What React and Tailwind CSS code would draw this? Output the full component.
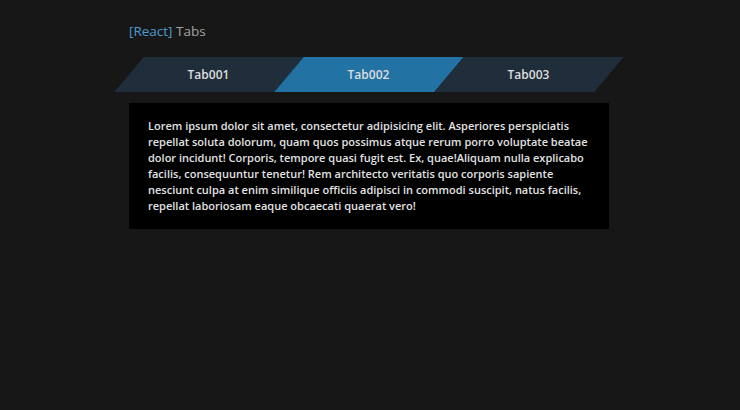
import { useState } from 'react';

const tabs = [
  { id: 'tab001', label: 'Tab001' },
  { id: 'tab002', label: 'Tab002' },
  { id: 'tab003', label: 'Tab003' },
];

const lorem =
  'Lorem ipsum dolor sit amet, consectetur adipisicing elit. Asperiores perspiciatis repellat soluta dolorum, quam quos possimus atque rerum porro voluptate beatae dolor incidunt! Corporis, tempore quasi fugit est. Ex, quae!Aliquam nulla explicabo facilis, consequuntur tenetur! Rem architecto veritatis quo corporis sapiente nesciunt culpa at enim similique officiis adipisci in commodi suscipit, natus facilis, repellat laboriosam eaque obcaecati quaerat vero!';

export default function App() {
  const [active, setActive] = useState('tab002');

  return (
    <div
      className="min-h-[410px] w-full bg-[#171717] pt-[21px]"
      style={{ fontFamily: '"Open Sans", "Noto Sans", sans-serif' }}
    >
      <div className="ml-[129px] w-[480px]">
        <h1 className="text-[13.5px] leading-[20px] text-[#a3a3a3]">
          <span className="text-[#4d9bd0]">[React]</span> Tabs
        </h1>

        <div className="mt-[16px] flex h-[35px]">
          {tabs.map((t) => (
            <button
              key={t.id}
              onClick={() => setActive(t.id)}
              className={`relative flex w-[160px] items-center justify-center -skew-x-[40deg] cursor-pointer ${
                active === t.id ? 'bg-[#2372a4]' : 'bg-[#202d3a]'
              }`}
            >
              <span className="skew-x-[40deg] text-[12px] font-semibold text-[#dedede]">{t.label}</span>
            </button>
          ))}
        </div>

        <div className="mt-[11px] bg-black px-[19px] py-[15px]">
          <p className="text-[11px] leading-[16px] font-semibold text-[#e2e2e2]">{lorem}</p>
        </div>
      </div>
    </div>
  );
}
